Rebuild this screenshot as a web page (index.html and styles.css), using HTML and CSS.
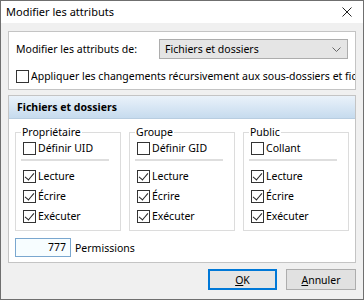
FILE: index.html
```html
<!DOCTYPE html>
<html>
<head>
<meta charset="utf-8">
<link rel="stylesheet" href="styles.css">
</head>
<body>
<div class="window">
  <div class="titlebar">
    <span class="title">Modifier les attributs</span>
    <svg class="close" width="10" height="10" viewBox="0 0 10 10"><path d="M0.5 0.5 L9.5 9.5 M9.5 0.5 L0.5 9.5" stroke="#222" stroke-width="1"/></svg>
  </div>
  <div class="body">
    <div class="panel top">
      <div class="row-combo">
        <span class="lbl">Modifier les attributs de:</span>
        <div class="combo">
          <span>Fichiers et dossiers</span>
          <svg width="9" height="5" viewBox="0 0 9 5"><path d="M0.5 0.5 L4.5 4.5 L8.5 0.5" fill="none" stroke="#666" stroke-width="1"/></svg>
        </div>
      </div>
      <label class="check recurse"><span class="box"></span><span class="txt">Appliquer les changements récursivement aux sous-dossiers et fichiers</span></label>
    </div>
    <div class="panel main">
      <div class="header">Fichiers et dossiers</div>
      <div class="groups">
        <fieldset class="group">
          <legend>Propriétaire</legend>
          <label class="check"><span class="box"></span>Définir UID</label>
          <div class="sep"></div>
          <label class="check"><span class="box on"></span>Lecture</label>
          <label class="check"><span class="box on"></span>Écrire</label>
          <label class="check"><span class="box on"></span>Exécuter</label>
        </fieldset>
        <fieldset class="group">
          <legend>Groupe</legend>
          <label class="check"><span class="box"></span>Définir GID</label>
          <div class="sep"></div>
          <label class="check"><span class="box on"></span>Lecture</label>
          <label class="check"><span class="box on"></span>Écrire</label>
          <label class="check"><span class="box on"></span>Exécuter</label>
        </fieldset>
        <fieldset class="group">
          <legend>Public</legend>
          <label class="check"><span class="box"></span>Collant</label>
          <div class="sep"></div>
          <label class="check"><span class="box on"></span>Lecture</label>
          <label class="check"><span class="box on"></span>Écrire</label>
          <label class="check"><span class="box on"></span>Exécuter</label>
        </fieldset>
      </div>
      <div class="perm-row">
        <div class="perm">777</div>
        <span>Permissions</span>
      </div>
    </div>
    <div class="buttons">
      <div class="btn default"><u>O</u>K</div>
      <div class="btn"><u>A</u>nnuler</div>
    </div>
  </div>
</div>
</body>
</html>
```
FILE: styles.css
```css
* { box-sizing: border-box; }
html, body { margin: 0; padding: 0; }
body {
  width: 364px;
  height: 300px;
  overflow: hidden;
  font-family: "Noto Sans", "Open Sans", sans-serif;
  font-size: 10.5px;
  color: #000;
  background: #fff;
}
.window {
  width: 364px;
  height: 300px;
  border: 1px solid #6f6f6f;
  background: #f0f0f0;
  display: flex;
  flex-direction: column;
}
.titlebar {
  height: 22px;
  background: #fff;
  display: flex;
  align-items: center;
  justify-content: space-between;
  padding: 0 11px 1px 5px;
  font-size: 11px;
  flex: none;
}
.close { display: block; }
.body {
  padding: 8px 7px 0 7px;
  flex: 1;
  display: flex;
  flex-direction: column;
}
.panel {
  background: #fff;
  border: 1px solid #c4c4c4;
}
.panel.top {
  height: 59px;
  padding: 7px 0 0 7px;
}
.row-combo {
  display: flex;
  align-items: center;
  height: 20px;
}
.lbl { width: 143px; flex: none; }
.combo {
  width: 189px;
  height: 20px;
  background: #e5e5e5;
  border: 1px solid #adadad;
  display: flex;
  align-items: center;
  justify-content: space-between;
  padding: 0 6px 0 5px;
}
.combo svg { display: block; }
.check {
  display: flex;
  align-items: center;
  height: 20px;
  white-space: nowrap;
}
.box {
  width: 13px;
  height: 13px;
  border: 1px solid #333;
  background: #fff;
  margin-right: 2px;
  flex: none;
  position: relative;
}
.box.on::after {
  content: "";
  position: absolute;
  left: 3px;
  top: 0px;
  width: 4px;
  height: 8px;
  border-right: 1px solid #222;
  border-bottom: 1px solid #222;
  transform: rotate(40deg);
}
.recurse {
  margin-top: 7px;
  overflow: hidden;
  width: 339px;
}
.recurse .txt { overflow: hidden; }
.panel.main {
  margin-top: 5px;
  height: 168px;
  padding: 0;
}
.header {
  height: 23px;
  background: linear-gradient(#eaf2fa, #c6dbee);
  border-bottom: 1px solid #b8cde0;
  font-weight: bold;
  display: flex;
  align-items: center;
  padding-left: 8px;
  padding-bottom: 1px;
}
.groups {
  display: grid;
  grid-template-columns: 106px 106px 106px;
  column-gap: 8px;
  padding: 0 6px;
  margin-top: 6px;
}
.group {
  margin: 0;
  border: 1px solid #dcdcdc;
  padding: 0 7px 3px 7px;
  min-width: 0;
  height: 106px;
}
.group legend {
  padding: 0 1px;
  margin-left: -2px;
  line-height: 14px;
}
.group .check { height: 20px; }
.group .check:first-of-type { margin-top: -1px; }
.sep {
  height: 2px;
  background: #dedede;
  margin: 1px 4px 5px -2px;
}
.perm-row {
  display: flex;
  align-items: center;
  padding-left: 6px;
  margin-top: 7px;
}
.perm {
  width: 56px;
  height: 19px;
  border: 1px solid #7aa7cf;
  background: #f7fdff;
  text-align: right;
  padding-right: 4px;
  line-height: 17px;
  margin-right: 4px;
}
.buttons {
  display: flex;
  justify-content: flex-end;
  gap: 9px;
  margin-top: 6px;
}
.btn {
  height: 21px;
  background: #e1e1e1;
  border: 1px solid #adadad;
  display: flex;
  align-items: center;
  justify-content: center;
  width: 70px;
}
.btn.default {
  width: 69px;
  border: 2px solid #0078d7;
  background: #e5e5e5;
}
```
